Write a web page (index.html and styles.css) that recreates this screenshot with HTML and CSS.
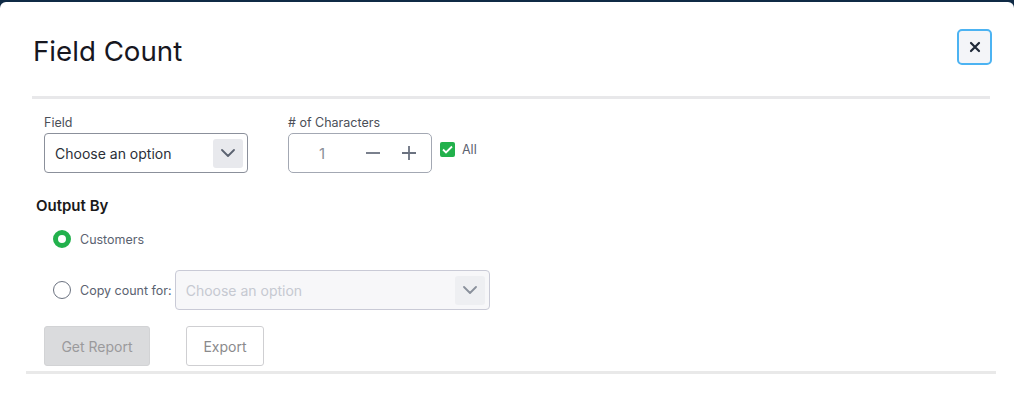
FILE: index.html
```html
<!DOCTYPE html>
<html lang="en">
<head>
    <meta charset="UTF-8">
    <meta name="viewport" content="width=device-width, initial-scale=1.0">
    <title>Field Count</title>
    <link rel="stylesheet" href="styles.css">
</head>
<body>

    <div class="modal">
        <div class="modal-header">
            <h1 class="modal-title">Field Count</h1>
            <button class="close-btn" aria-label="Close">
                <svg width="12" height="12" viewBox="0 0 12 12">
                    <path d="M2 2 L10 10 M10 2 L2 10" stroke="#1f2937" stroke-width="2.2" stroke-linecap="round"/>
                </svg>
            </button>
        </div>
        <div class="divider"></div>

        <div class="field-row">
            <div class="field-group">
                <label class="field-label">Field</label>
                <div class="select select-field">
                    <span class="select-text">Choose an option</span>
                    <span class="select-arrow">
                        <svg width="14" height="8" viewBox="0 0 14 8">
                            <path d="M1 1 L7 7 L13 1" fill="none" stroke="#5b6270" stroke-width="1.8" stroke-linecap="round" stroke-linejoin="round"/>
                        </svg>
                    </span>
                </div>
            </div>

            <div class="field-group chars-group">
                <label class="field-label"># of Characters</label>
                <div class="chars-line">
                    <div class="stepper">
                        <span class="stepper-value">1</span>
                        <span class="stepper-btn">
                            <svg width="16" height="16" viewBox="0 0 16 16"><path d="M1 8 H15" stroke="#6b7280" stroke-width="1.8"/></svg>
                        </span>
                        <span class="stepper-btn">
                            <svg width="16" height="16" viewBox="0 0 16 16"><path d="M1 8 H15 M8 1 V15" stroke="#6b7280" stroke-width="1.8"/></svg>
                        </span>
                    </div>
                    <label class="check">
                        <span class="check-box">
                            <svg width="11" height="9" viewBox="0 0 11 9"><path d="M1 4.5 L4 7.5 L10 1.5" fill="none" stroke="#fff" stroke-width="1.8"/></svg>
                        </span>
                        <span class="check-text">All</span>
                    </label>
                </div>
            </div>
        </div>

        <h3 class="section-title">Output By</h3>

        <div class="radio-row">
            <span class="radio radio-on"></span>
            <span class="radio-text">Customers</span>
        </div>
        <div class="radio-row radio-row-copy">
            <span class="radio"></span>
            <span class="radio-text">Copy count for:</span>
            <div class="select select-disabled">
                <span class="select-text">Choose an option</span>
                <span class="select-arrow">
                    <svg width="14" height="8" viewBox="0 0 14 8">
                        <path d="M1 1 L7 7 L13 1" fill="none" stroke="#8a909c" stroke-width="1.8" stroke-linecap="round" stroke-linejoin="round"/>
                    </svg>
                </span>
            </div>
        </div>

        <div class="actions">
            <button class="btn btn-disabled">Get Report</button>
            <button class="btn btn-outline">Export</button>
        </div>
        <div class="divider divider-bottom"></div>
    </div>

</body>
</html>
```

FILE: styles.css
```css
html, body {
    margin: 0;
    height: 100%;
}
body {
    background-color: #0f2a45;
    font-family: Inter, "Noto Sans", sans-serif;
    overflow: hidden;
}
.modal {
    margin-top: 2px;
    background-color: #fff;
    border-radius: 6px 6px 0 0;
    height: 420px;
}
.modal-header {
    display: flex;
    justify-content: space-between;
    align-items: flex-start;
    padding: 27px 22px 0 33px;
    height: 67px;
}
.modal-title {
    margin: 0;
    font-size: 27.7px;
    font-weight: 400;
    color: #17171f;
    line-height: 44px;
}
.close-btn {
    width: 35px;
    height: 36px;
    border: 2px solid #4cb3f2;
    border-radius: 5px;
    background-color: #f4f5f8;
    display: flex;
    align-items: center;
    justify-content: center;
    padding: 0;
    cursor: pointer;
}
.divider {
    height: 3px;
    background-color: #e8e8ea;
    margin: 0 24px 0 32px;
}
.field-row {
    display: flex;
    gap: 40px;
    padding: 16px 0 0 44px;
}
.field-label {
    display: block;
    font-size: 12.5px;
    color: #4b4f58;
    line-height: 16px;
    margin-bottom: 2px;
}
.select {
    box-sizing: border-box;
    display: flex;
    align-items: center;
    justify-content: space-between;
    height: 40px;
    border: 1px solid #8b909b;
    border-radius: 4px;
    padding: 0 4px 0 10px;
}
.select-field {
    width: 204px;
}
.select-text {
    font-size: 14px;
    color: #2b2f38;
}
.select-arrow {
    width: 30px;
    height: 29px;
    border-radius: 3px;
    background-color: #e8e9ed;
    display: flex;
    align-items: center;
    justify-content: center;
}
.chars-line {
    display: flex;
    align-items: flex-start;
    gap: 8px;
}
.stepper {
    box-sizing: border-box;
    width: 144px;
    height: 40px;
    border: 1px solid #a3a8b3;
    border-radius: 5px;
    display: flex;
    align-items: center;
}
.stepper-value {
    width: 66px;
    text-align: center;
    font-size: 15px;
    color: #8a8f99;
}
.stepper-btn {
    width: 36px;
    display: flex;
    justify-content: center;
}
.check {
    display: flex;
    align-items: center;
    gap: 7px;
    margin-top: 9px;
}
.check-box {
    width: 15px;
    height: 15px;
    background-color: #22b14c;
    border-radius: 2px;
    display: flex;
    align-items: center;
    justify-content: center;
}
.check-text {
    font-size: 12.5px;
    color: #5b6270;
}
.section-title {
    margin: 23px 0 0 36px;
    font-size: 15px;
    font-weight: 600;
    color: #1a1a1a;
    line-height: 20px;
}
.radio-row {
    display: flex;
    align-items: center;
    gap: 9px;
    padding-left: 53px;
    margin-top: 11px;
    height: 24px;
}
.radio-row-copy {
    margin-top: 19px;
    height: 40px;
}
.radio {
    box-sizing: border-box;
    width: 18px;
    height: 18px;
    border-radius: 50%;
    border: 1.5px solid #6b7280;
}
.radio-on {
    border: 5px solid #22b14c;
    background-color: #fff;
}
.radio-text {
    font-size: 12.5px;
    color: #5b6270;
}
.select-disabled {
    width: 315px;
    margin-left: -6px;
    background-color: #f7f7f9;
    border-color: #c9cad6;
}
.select-disabled .select-text {
    color: #c6c9d1;
}
.select-disabled .select-arrow {
    background-color: #eeeff2;
}
.actions {
    display: flex;
    gap: 36px;
    padding: 16px 0 0 44px;
}
.btn {
    height: 40px;
    font-family: Inter, "Noto Sans", sans-serif;
    font-size: 14px;
    border-radius: 3px;
    padding: 0 16px;
}
.btn-disabled {
    width: 106px;
    background-color: #dadbdd;
    color: #9a9a9c;
    border: 1px solid #d2d3d5;
}
.btn-outline {
    width: 78px;
    background-color: #fff;
    color: #8a8a8c;
    border: 1px solid #cfcfd2;
}
.divider-bottom {
    margin: 5px 18px 0 26px;
    background-color: #e9e9e9;
}
```
